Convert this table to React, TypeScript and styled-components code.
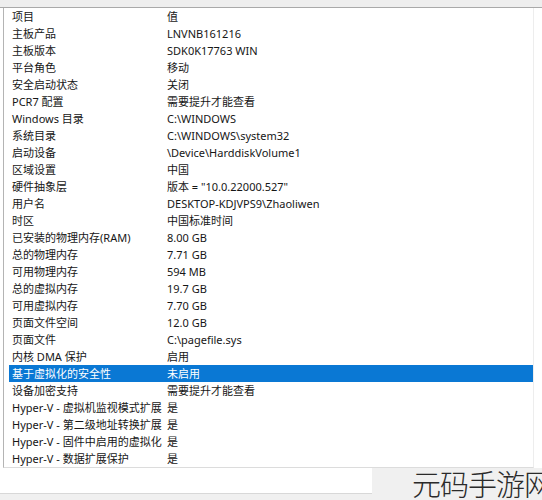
import React from "react";
import styled, { createGlobalStyle } from "styled-components";

const Global = createGlobalStyle`
  html, body { margin: 0; padding: 0; background: #ffffff; }
  body { width: 542px; height: 500px; overflow: hidden; }
  #root { width: 542px; height: 500px; }
`;

const Window = styled.div`
  position: relative;
  width: 542px;
  height: 500px;
  overflow: hidden;
  display: flex;
  flex-direction: column;
  background: #ffffff;
  font-family: "Noto Sans", "Noto Sans CJK SC", sans-serif;
  font-size: 11px;
  color: #111;
`;

const TopBand = styled.div`
  height: 7px;
  flex: none;
  background: #eeeeee;
  border-bottom: 1px solid #a9a9a9;
`;

const List = styled.div`
  box-sizing: border-box;
  flex: none;
  margin-left: 3px;
  width: 531px;
  border-left: 1px solid #b4b4b4;
  border-right: 1px solid #ededed;
  border-bottom: 1px solid #dcdcdc;
  padding-left: 5px;
  display: flex;
  flex-direction: column;
`;

const Row = styled.div<{ $selected?: boolean }>`
  height: 17px;
  display: grid;
  grid-template-columns: 155px 1fr;
  align-items: center;
  background: ${(p) => (p.$selected ? "#0a78d4" : "transparent")};
  color: ${(p) => (p.$selected ? "#ffffff" : "#161616")};
  white-space: nowrap;
  overflow: hidden;
  line-height: 17px;
`;

const Cell = styled.span`
  padding-left: 3px;
  overflow: hidden;
`;

const Footer = styled.div`
  flex: 1;
  background: #f0f0f0;
  display: flex;
  align-items: flex-start;
`;

const SearchBox = styled.div`
  width: 372px;
  height: 25px;
  background: #ffffff;
  border-bottom: 1px solid #d8d8d8;
`;

const Watermark = styled.div`
  position: absolute;
  right: -10px;
  bottom: 1px;
  font-family: "Noto Sans CJK SC", sans-serif;
  font-weight: 300;
  font-size: 29px;
  line-height: 31px;
  letter-spacing: -1px;
  color: #2a2a2a;
`;

const rows: [string, string][] = [
  ["项目", "值"],
  ["主板产品", "LNVNB161216"],
  ["主板版本", "SDK0K17763 WIN"],
  ["平台角色", "移动"],
  ["安全启动状态", "关闭"],
  ["PCR7 配置", "需要提升才能查看"],
  ["Windows 目录", "C:\\WINDOWS"],
  ["系统目录", "C:\\WINDOWS\\system32"],
  ["启动设备", "\\Device\\HarddiskVolume1"],
  ["区域设置", "中国"],
  ["硬件抽象层", "版本 = \"10.0.22000.527\""],
  ["用户名", "DESKTOP-KDJVPS9\\Zhaoliwen"],
  ["时区", "中国标准时间"],
  ["已安装的物理内存(RAM)", "8.00 GB"],
  ["总的物理内存", "7.71 GB"],
  ["可用物理内存", "594 MB"],
  ["总的虚拟内存", "19.7 GB"],
  ["可用虚拟内存", "7.70 GB"],
  ["页面文件空间", "12.0 GB"],
  ["页面文件", "C:\\pagefile.sys"],
  ["内核 DMA 保护", "启用"],
  ["基于虚拟化的安全性", "未启用"],
  ["设备加密支持", "需要提升才能查看"],
  ["Hyper-V - 虚拟机监视模式扩展", "是"],
  ["Hyper-V - 第二级地址转换扩展", "是"],
  ["Hyper-V - 固件中启用的虚拟化", "是"],
  ["Hyper-V - 数据扩展保护", "是"],
];

export default function App() {
  return (
    <Window>
      <Global />
      <TopBand />
      <List>
        {rows.map(([k, v], i) => (
          <Row key={i} $selected={i === 21}>
            <Cell>{k}</Cell>
            <Cell>{v}</Cell>
          </Row>
        ))}
      </List>
      <Footer>
        <SearchBox />
      </Footer>
      <Watermark>元码手游网</Watermark>
    </Window>
  );
}
